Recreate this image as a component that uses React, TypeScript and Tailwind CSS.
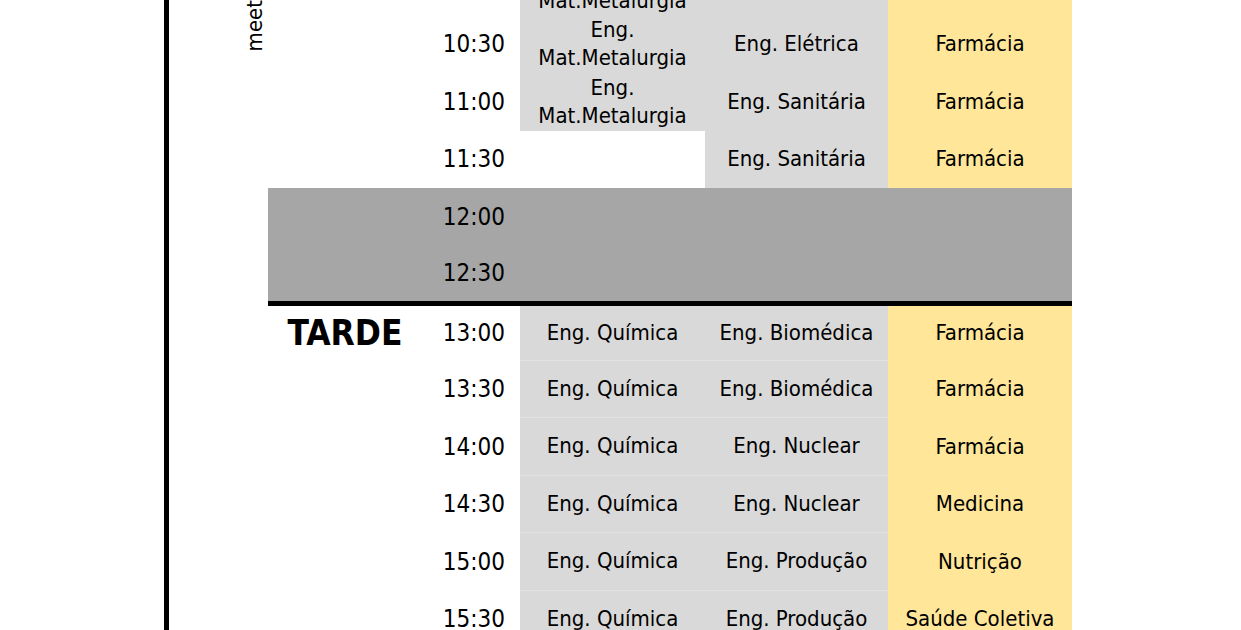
import React from "react";

type Cell = { text?: string[]; bg: "gray" | "yellow" | "white" };
type Row = {
  time: string;
  showTime?: boolean;
  label?: string;
  cells?: Cell[];
  lunch?: boolean;
  h: string;
  sep?: boolean;
  thick?: boolean;
};

const MM = ["Eng.", "Mat.Metalurgia"];

const rows: Row[] = [
  { time: "10:00", showTime: false, h: "h-[57.5px]", cells: [{ text: MM, bg: "gray" }, { bg: "gray" }, { bg: "yellow" }] },
  { time: "10:30", h: "h-[57.5px]", cells: [{ text: MM, bg: "gray" }, { text: ["Eng. Elétrica"], bg: "gray" }, { text: ["Farmácia"], bg: "yellow" }] },
  { time: "11:00", h: "h-[57.5px]", cells: [{ text: MM, bg: "gray" }, { text: ["Eng. Sanitária"], bg: "gray" }, { text: ["Farmácia"], bg: "yellow" }] },
  { time: "11:30", h: "h-[57.5px]", cells: [{ bg: "white" }, { text: ["Eng. Sanitária"], bg: "gray" }, { text: ["Farmácia"], bg: "yellow" }] },
  { time: "12:00", h: "h-[57.5px]", lunch: true },
  { time: "12:30", h: "h-[60px]", lunch: true, thick: true },
  { time: "13:00", label: "TARDE", h: "h-[55px]", sep: true, cells: [{ text: ["Eng. Química"], bg: "gray" }, { text: ["Eng. Biomédica"], bg: "gray" }, { text: ["Farmácia"], bg: "yellow" }] },
  { time: "13:30", h: "h-[57.5px]", sep: true, cells: [{ text: ["Eng. Química"], bg: "gray" }, { text: ["Eng. Biomédica"], bg: "gray" }, { text: ["Farmácia"], bg: "yellow" }] },
  { time: "14:00", h: "h-[57.5px]", sep: true, cells: [{ text: ["Eng. Química"], bg: "gray" }, { text: ["Eng. Nuclear"], bg: "gray" }, { text: ["Farmácia"], bg: "yellow" }] },
  { time: "14:30", h: "h-[57.5px]", sep: true, cells: [{ text: ["Eng. Química"], bg: "gray" }, { text: ["Eng. Nuclear"], bg: "gray" }, { text: ["Medicina"], bg: "yellow" }] },
  { time: "15:00", h: "h-[57.5px]", sep: true, cells: [{ text: ["Eng. Química"], bg: "gray" }, { text: ["Eng. Produção"], bg: "gray" }, { text: ["Nutrição"], bg: "yellow" }] },
  { time: "15:30", h: "h-[57.5px]", sep: true, cells: [{ text: ["Eng. Química"], bg: "gray" }, { text: ["Eng. Produção"], bg: "gray" }, { text: ["Saúde Coletiva"], bg: "yellow" }] },
];

const bgClass = (bg: Cell["bg"]) =>
  bg === "gray" ? "bg-[#d9d9d9]" : bg === "yellow" ? "bg-[#ffe699]" : "bg-white";

function DataCell({ cell, sep }: { cell: Cell; sep?: boolean }) {
  return (
    <div
      className={`${bgClass(cell.bg)} ${
        sep && cell.bg === "gray" ? "border-b border-[#e3e3e3]" : ""
      } flex flex-col items-center justify-center overflow-hidden text-center text-[22px] leading-[28px]`}
    >
      {cell.text?.map((t, i) => (
        <span key={i} className="whitespace-nowrap">
          {t}
        </span>
      ))}
    </div>
  );
}

export default function App() {
  return (
    <div className="w-[1241px] h-[630px] overflow-hidden bg-white text-black font-['DejaVu_Sans_Condensed','DejaVu_Sans',sans-serif]">
      <div className="flex h-full">
        <div className="w-[164px] shrink-0" />
        <div className="w-[5px] shrink-0 bg-black" />
        <div className="w-[99px] shrink-0 flex justify-end items-start pr-[2px]">
          <span className="[writing-mode:vertical-rl] rotate-180 text-[22px] leading-[22px] whitespace-nowrap">
            meet
          </span>
        </div>
        <div className="w-[804px] shrink-0 flex flex-col -mt-[42px]">
          {rows.map((r) => (
            <div
              key={r.time}
              className={`${r.h} shrink-0 grid grid-cols-[154px_98px_185px_183px_184px] ${
                r.lunch ? "bg-[#a6a6a6]" : ""
              } ${r.thick ? "border-b-[5px] border-black" : ""}`}
            >
              <div className="flex items-center justify-center">
                {r.label && (
                  <span className="text-[35px] font-bold leading-none pt-[1px]">{r.label}</span>
                )}
              </div>
              <div className="flex items-center justify-end pr-[15px] text-[24px]">
                {r.showTime === false ? null : r.time}
              </div>
              {r.lunch ? (
                <>
                  <div />
                  <div />
                  <div />
                </>
              ) : (
                r.cells!.map((c, i) => <DataCell key={i} cell={c} sep={r.sep} />)
              )}
            </div>
          ))}
        </div>
      </div>
    </div>
  );
}
